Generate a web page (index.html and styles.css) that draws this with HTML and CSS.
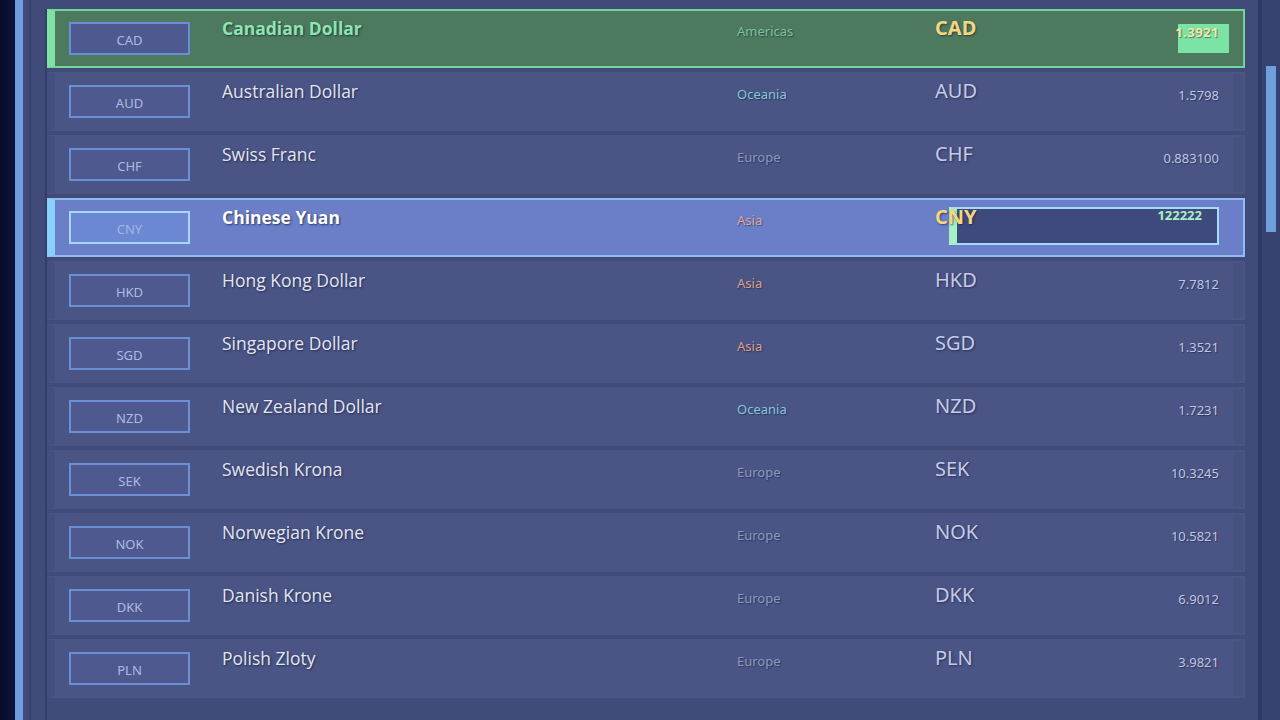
FILE: index.html
```html
<!DOCTYPE html>
<html lang="en">
<head>
<meta charset="utf-8">
<title>Currencies</title>
<link rel="stylesheet" href="styles.css">
</head>
<body>
<div class="app">
  <div class="edge"></div>
  <div class="stripe"></div>
  <main class="panel">
    <div class="list">
      <div class="row row-green">
        <div class="box">CAD</div>
        <div class="name">Canadian Dollar</div>
        <div class="region americas">Americas</div>
        <div class="code">CAD</div>
        <div class="rate"><span class="rate-chip"></span><span class="rate-text">1.3921</span></div>
      </div>
      <div class="row">
        <div class="box">AUD</div>
        <div class="name">Australian Dollar</div>
        <div class="region oceania">Oceania</div>
        <div class="code">AUD</div>
        <div class="rate">1.5798</div>
      </div>
      <div class="row">
        <div class="box">CHF</div>
        <div class="name">Swiss Franc</div>
        <div class="region europe">Europe</div>
        <div class="code">CHF</div>
        <div class="rate">0.883100</div>
      </div>
      <div class="row row-blue">
        <div class="box">CNY</div>
        <div class="name">Chinese Yuan</div>
        <div class="region asia">Asia</div>
        <div class="code">CNY</div>
        <div class="editor"><span class="editor-value">122222</span></div>
      </div>
      <div class="row">
        <div class="box">HKD</div>
        <div class="name">Hong Kong Dollar</div>
        <div class="region asia">Asia</div>
        <div class="code">HKD</div>
        <div class="rate">7.7812</div>
      </div>
      <div class="row">
        <div class="box">SGD</div>
        <div class="name">Singapore Dollar</div>
        <div class="region asia">Asia</div>
        <div class="code">SGD</div>
        <div class="rate">1.3521</div>
      </div>
      <div class="row">
        <div class="box">NZD</div>
        <div class="name">New Zealand Dollar</div>
        <div class="region oceania">Oceania</div>
        <div class="code">NZD</div>
        <div class="rate">1.7231</div>
      </div>
      <div class="row">
        <div class="box">SEK</div>
        <div class="name">Swedish Krona</div>
        <div class="region europe">Europe</div>
        <div class="code">SEK</div>
        <div class="rate">10.3245</div>
      </div>
      <div class="row">
        <div class="box">NOK</div>
        <div class="name">Norwegian Krone</div>
        <div class="region europe">Europe</div>
        <div class="code">NOK</div>
        <div class="rate">10.5821</div>
      </div>
      <div class="row">
        <div class="box">DKK</div>
        <div class="name">Danish Krone</div>
        <div class="region europe">Europe</div>
        <div class="code">DKK</div>
        <div class="rate">6.9012</div>
      </div>
      <div class="row">
        <div class="box">PLN</div>
        <div class="name">Polish Zloty</div>
        <div class="region europe">Europe</div>
        <div class="code">PLN</div>
        <div class="rate">3.9821</div>
      </div>
    </div>
  </main>
  <div class="scroll">
    <div class="thumb"></div>
  </div>
</div>
</body>
</html>
```

FILE: styles.css
```css
* { box-sizing: border-box; }
html, body { margin: 0; padding: 0; }
body {
  width: 1280px;
  height: 720px;
  overflow: hidden;
  background: #0a0f33;
  font-family: "Open Sans", "Noto Sans", sans-serif;
}
.app {
  display: flex;
  height: 720px;
}
.edge {
  width: 15px;
  background: linear-gradient(90deg, #070b2a, #0d1440);
}
.stripe {
  width: 8px;
  background: #6d9de0;
}
.panel {
  flex: 1;
  background: #414b7a;
  border-left: 6px solid #414b7a;
  padding: 9px 13px 0 0;
  position: relative;
}
.panel::before {
  content: "";
  position: absolute;
  left: 0;
  top: 0;
  bottom: 0;
  width: 2px;
  background: #38416e;
}
.list {
  margin-left: 16px;
  border-left: 2px solid #353e6a;
  display: flex;
  flex-direction: column;
  gap: 4px;
  height: 711px;
}
.row {
  position: relative;
  height: 59px;
  display: grid;
  grid-template-columns: 121px 547px 198px 1fr auto;
  align-items: start;
  padding: 0 24px 0 14px;
  background: #4a5585;
  border: 2px solid transparent;
  border-left-width: 8px;
  border-left-color: #444f7f;
  box-shadow: inset -10px 0 0 #46517f;
}
.box {
  margin-top: 11px;
  height: 33px;
  border: 2px solid #6a8fd4;
  background: #4e5a8f;
  color: #aeb9e2;
  font-family: "Noto Sans", sans-serif;
  font-size: 13px;
  display: flex;
  align-items: center;
  justify-content: center;
  padding-top: 2px;
}
.name {
  margin: 6px 0 0 32px;
  font-size: 17.5px;
  font-weight: 500;
  color: #e2e6f3;
  line-height: 22px;
  text-shadow: 1px 1px 2px rgba(20, 25, 60, 0.7);
  white-space: nowrap;
}
.region {
  margin-top: 12px;
  font-family: "Noto Sans", sans-serif;
  font-size: 13px;
  line-height: 16px;
  text-shadow: 1px 1px 1px rgba(20, 25, 60, 0.5);
}
.europe { color: #8d97c0; }
.oceania { color: #83c8da; }
.asia { color: #dc9e88; }
.americas { color: #7ec89c; }
.code {
  margin-top: 5px;
  font-family: "Noto Sans", sans-serif;
  font-size: 20px;
  line-height: 24px;
  color: #c5cbe8;
  text-shadow: 1px 1px 2px rgba(20, 25, 60, 0.6);
  position: relative;
  z-index: 2;
}
.rate {
  position: relative;
  margin-top: 13px;
  font-family: "Noto Sans", sans-serif;
  font-size: 13px;
  line-height: 16px;
  color: #bfc6e2;
  text-align: right;
  text-shadow: 1px 1px 1px rgba(20, 25, 60, 0.5);
}

/* selected green row */
.row-green {
  background: #4d7a5f;
  border-color: #72d49a;
  border-left-color: #7de3a3;
  box-shadow: none;
}
.row-green .name { color: #8ee6ae; font-weight: 700; }
.row-green .code { color: #f2d77e; font-weight: 700; }
.row-green .region { color: #79c498; }
.rate-chip {
  position: absolute;
  right: -10px;
  top: 0;
  width: 51px;
  height: 29px;
  background: #7be3a4;
}
.rate-text {
  position: relative;
  color: #f3e7a4;
  font-weight: 700;
  letter-spacing: 0.5px;
}

/* editing blue row */
.row-blue {
  background: #6b7fc9;
  border-color: #8fbdf2;
  border-left-color: #89d0fa;
  box-shadow: none;
}
.row-blue .box {
  background: #6d88d2;
  border-color: #a6d8fa;
  color: #a3b5e6;
}
.row-blue .name { color: #ffffff; font-weight: 700; }
.row-blue .region { color: #e2a896; }
.row-blue .code { color: #f2d77e; font-weight: 700; }
.editor {
  position: absolute;
  left: 894px;
  top: 7px;
  width: 270px;
  height: 38px;
  background: #3f4a7c;
  border: 2px solid #a3dcfa;
  border-left: 8px solid #a7f0c2;
  text-align: right;
  padding-right: 15px;
  z-index: 1;
}
.editor-value {
  font-family: "Noto Sans", sans-serif;
  font-size: 13px;
  font-weight: 700;
  line-height: 14px;
  color: #a9efc2;
  display: inline-block;
  vertical-align: top;
  margin-top: -1px;
}

.scroll {
  width: 22px;
  background: #384270;
  border-left: 4px solid #2f3864;
  padding: 66px 4px 0 4px;
}
.thumb {
  height: 166px;
  background: #6f9fdc;
}
```
